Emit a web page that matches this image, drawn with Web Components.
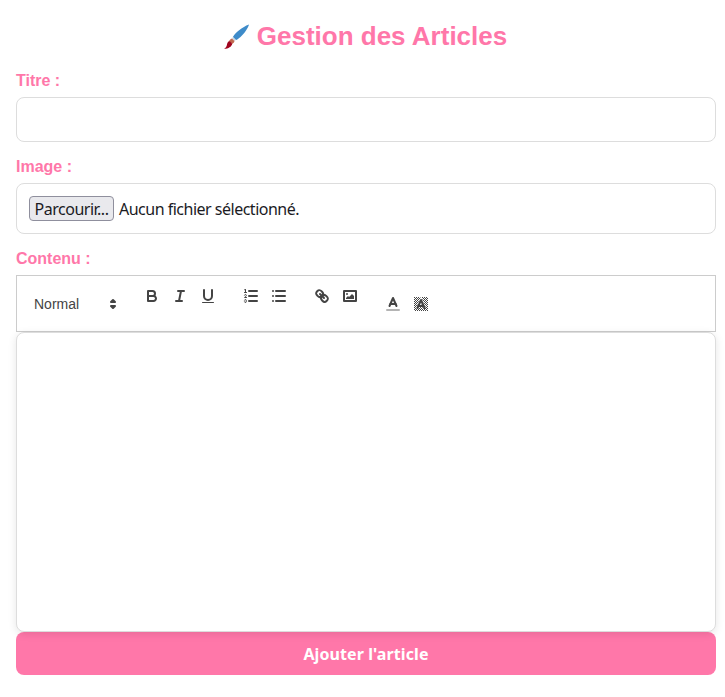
<!DOCTYPE html>
<html lang="fr">
<head>
<meta charset="utf-8">
<title>Gestion des Articles</title>
<style>
  html, body { margin: 0; background: #fff; }
  body { font-family: "Liberation Sans", Arial, sans-serif; }
</style>
</head>
<body>
<template id="tpl-form">
  <style>
    :host { display: block; padding: 0 9px 22px 16px; }
    h2 {
      margin: 0;
      height: 71px;
      box-sizing: border-box;
      padding: 2px 3px 0 0;
      display: flex;
      align-items: center;
      justify-content: center;
      gap: 7px;
      font: bold 26px "Liberation Sans", Arial, sans-serif;
      color: #ff77a9;
    }
    h2 svg { width: 28px; height: 28px; flex: none; }
    .stack { display: flex; flex-direction: column; }
  </style>
  <h2>
    <svg viewBox="0 0 28 28">
      <path d="M27 1.5c-1 3.5-4.5 9-8.5 12.5-1.8 1.6-3.4 2.6-4.6 3.1l-3-3c.7-1.5 2-3.2 3.8-4.9C18.500 5.800 24 2.400 27 1.500z" fill="#3e8bc9"/>
      <path d="M10.900 14.100l3 3-1.400.9-2.600-2.600z" fill="#ccd6dd"/>
      <path d="M9.900 15.400l2.600 2.600c-.3 1.300-1.100 2.300-2.300 2.900l-3.100-2.900c.6-1.300 1.500-2.200 2.800-2.600z" fill="#c1694f"/>
      <path d="M7.100 18c1.300.6 2.400 1.700 3.100 2.900-.7 2.600-3.500 4.700-8.200 4.900 2-1.100 2.700-2.500 3-4.300.2-1.400.9-2.700 2.100-3.500z" fill="#a0041e"/>
    </svg>
    <span>Gestion des Articles</span>
  </h2>
  <div class="stack"><slot></slot></div>
</template>

<template id="tpl-field">
  <style>
    :host { display: block; }
    label {
      display: block;
      box-sizing: border-box;
      height: 26px;
      padding-top: 1px;
      font: bold 16px/18px "Liberation Sans", Arial, sans-serif;
      color: #ff77a9;
    }
  </style>
  <label></label>
  <slot></slot>
</template>

<template id="tpl-text">
  <style>
    :host { display: block; margin-bottom: 15px; }
    input {
      display: block;
      box-sizing: border-box;
      width: 100%;
      height: 45px;
      padding: 10px;
      border: 1px solid #ddd;
      border-radius: 8px;
      outline: none;
      font: 16px "Liberation Sans", Arial, sans-serif;
    }
  </style>
  <input type="text" aria-label="Titre">
</template>

<template id="tpl-file">
  <style>
    :host {
      display: flex;
      align-items: center;
      gap: 5px;
      box-sizing: border-box;
      height: 51px;
      margin-bottom: 15px;
      padding: 0 12px;
      border: 1px solid #ddd;
      border-radius: 8px;
      font: 16px "Noto Sans", Tahoma, sans-serif;
      letter-spacing: -0.5px;
      color: #1b1b1f;
    }
    button {
      width: 85px;
      height: 25px;
      padding: 0;
      border: 1px solid #8f8f9d;
      border-radius: 4px;
      background: #e9e9ed;
      color: #1b1b1f;
      font: inherit;
      letter-spacing: inherit;
      line-height: 1;
    }
  </style>
  <button type="button">Parcourir...</button>
  <span>Aucun fichier sélectionné.</span>
</template>

<template id="tpl-toolbar">
  <style>
    :host {
      display: flex;
      align-items: flex-start;
      box-sizing: border-box;
      height: 57px;
      padding: 8px;
      border: 1px solid #ccc;
      font: 14px "Liberation Sans", Helvetica, Arial, sans-serif;
      color: #444;
    }
    .group { display: flex; align-items: flex-start; margin-right: 15px; }
    .shift { margin-top: 8px; }
    .picker {
      display: flex;
      align-items: center;
      justify-content: space-between;
      box-sizing: border-box;
      width: 98px;
      height: 24px;
      padding: 0 1px 0 9px;
    }
    button {
      width: 28px;
      height: 24px;
      padding: 3px 5px;
      border: 0;
      background: none;
    }
    svg { display: block; width: 18px; height: 18px; }
    .s { fill: none; stroke: #444; stroke-width: 2; stroke-linecap: round; stroke-linejoin: round; }
    .t { fill: none; stroke: #444; stroke-width: 1; stroke-linecap: round; stroke-linejoin: round; }
    .f { fill: #444; }
    .halo { fill: none; stroke: #fff; stroke-width: 3; }
    .picker svg .p { fill: none; stroke: #444; stroke-width: 2; stroke-linejoin: round; }
  </style>
  <div class="group shift">
    <div class="picker">
      <span>Normal</span>
      <svg viewBox="0 0 18 18">
        <polygon class="p" points="7 11 9 13 11 11 7 11"/>
        <polygon class="p" points="7 7 9 5 11 7 7 7"/>
      </svg>
    </div>
  </div>
  <div class="group">
    <button type="button" aria-label="Gras"><svg viewBox="0 0 18 18">
      <path class="s" d="M5,4H9.500A2.500,2.500,0,0,1,12,6.500v0A2.500,2.500,0,0,1,9.500,9H5A0,0,0,0,1,5,9V4A0,0,0,0,1,5,4Z"/>
      <path class="s" d="M5,9h5.500A2.500,2.500,0,0,1,13,11.500v0A2.500,2.500,0,0,1,10.500,14H5a0,0,0,0,1,0,0V9A0,0,0,0,1,5,9Z"/>
    </svg></button>
    <button type="button" aria-label="Italique"><svg viewBox="0 0 18 18">
      <line class="s" x1="7" x2="13" y1="4" y2="4"/>
      <line class="s" x1="5" x2="11" y1="14" y2="14"/>
      <line class="s" x1="8" x2="10" y1="14" y2="4"/>
    </svg></button>
    <button type="button" aria-label="Souligné"><svg viewBox="0 0 18 18">
      <path class="s" d="M5,3V9a4.012,4.012,0,0,0,4,4H9a4.012,4.012,0,0,0,4-4V3"/>
      <rect class="f" height="1" rx=".5" ry=".5" width="12" x="3" y="15"/>
    </svg></button>
  </div>
  <div class="group">
    <button type="button" aria-label="Liste numérotée"><svg viewBox="0 0 18 18">
      <line class="s" x1="7" x2="15" y1="4" y2="4"/>
      <line class="s" x1="7" x2="15" y1="9" y2="9"/>
      <line class="s" x1="7" x2="15" y1="14" y2="14"/>
      <line class="t" x1="2.500" x2="4.500" y1="5.500" y2="5.500"/>
      <path class="f" d="M3.500,6A0.500,0.500,0,0,1,3,5.500V3.085l-0.276.138A0.500,0.500,0,0,1,2.053,3c-0.124-.247-0.023-0.324.224-0.447l1-.5A0.500,0.500,0,0,1,4,2.500v3A0.500,0.500,0,0,1,3.500,6Z"/>
      <path class="t" d="M4.500,10.500h-2c0-.234,1.850-1.076,1.850-2.234A0.959,0.959,0,0,0,2.500,8.156"/>
      <path class="t" d="M2.500,14.846a0.959,0.959,0,0,0,1.850-.109A0.700,0.700,0,0,0,3.750,14a0.688,0.688,0,0,0,.6-0.736,0.959,0.959,0,0,0-1.850-.109"/>
    </svg></button>
    <button type="button" aria-label="Liste à puces"><svg viewBox="0 0 18 18">
      <line class="s" x1="6" x2="15" y1="4" y2="4"/>
      <line class="s" x1="6" x2="15" y1="9" y2="9"/>
      <line class="s" x1="6" x2="15" y1="14" y2="14"/>
      <line class="s" x1="3" x2="3" y1="4" y2="4"/>
      <line class="s" x1="3" x2="3" y1="9" y2="9"/>
      <line class="s" x1="3" x2="3" y1="14" y2="14"/>
    </svg></button>
  </div>
  <div class="group">
    <button type="button" aria-label="Lien"><svg viewBox="0 0 18 18">
      <line class="s" x1="7" x2="11" y1="7" y2="11"/>
      <path class="s" d="M8.900,4.577a3.476,3.476,0,0,1,.36,4.679A3.476,3.476,0,0,1,4.577,8.900C3.185,7.500,2.035,6.400,4.217,4.217S7.500,3.185,8.900,4.577Z"/>
      <path class="s" d="M13.423,9.100a3.476,3.476,0,0,0-4.679-.36,3.476,3.476,0,0,0,.36,4.679c1.392,1.392,2.500,2.542,4.679.36S14.815,10.500,13.423,9.100Z"/>
    </svg></button>
    <button type="button" aria-label="Image"><svg viewBox="0 0 18 18">
      <rect class="s" height="10" width="12" x="3" y="4"/>
      <circle class="f" cx="6" cy="7" r="1"/>
      <polyline class="f" points="5 12 5 11 7 9 8 10 11 7 13 9 13 12 5 12"/>
    </svg></button>
  </div>
  <div class="group shift">
    <button type="button" aria-label="Couleur"><svg viewBox="0 0 18 18">
      <line class="s" style="opacity:.4" x1="3" x2="15" y1="15" y2="15"/>
      <polyline class="s" points="5.500 11 9 3 12.500 11"/>
      <line class="s" x1="11.630" x2="6.380" y1="9" y2="9"/>
    </svg></button>
    <button type="button" aria-label="Fond"><svg viewBox="0 0 18 18">
      <defs>
        <pattern id="hatch" width="2" height="2" patternUnits="userSpaceOnUse">
          <rect width="1" height="1" fill="#444"/>
          <rect x="1" y="1" width="1" height="1" fill="#444"/>
        </pattern>
      </defs>
      <rect x="2" y="2" width="14" height="14" fill="url(#hatch)"/>
      <polyline class="halo" points="5.500 13 9 5 12.500 13"/>
      <polyline class="s" points="5.500 13 9 5 12.500 13"/>
      <line class="s" x1="11.630" x2="6.380" y1="11" y2="11"/>
    </svg></button>
  </div>
</template>

<template id="tpl-editor">
  <style>
    :host {
      display: block;
      position: relative;
      box-sizing: border-box;
      height: 300px;
      border: 1px solid #ddd;
      border-radius: 8px;
      background: #fff;
      box-shadow: 0 2px 8px rgba(0, 0, 0, 0.1);
    }
  </style>
</template>

<template id="tpl-submit">
  <style>
    :host { display: block; }
    button {
      display: block;
      width: 100%;
      height: 43px;
      border: 0;
      border-radius: 8px;
      background: #ff77a9;
      color: #fff;
      font: bold 16px "Noto Sans", Tahoma, sans-serif;
      letter-spacing: 0.1px;
    }
  </style>
  <button type="button"><slot></slot></button>
</template>

<article-form>
  <form-field label="Titre :"><text-box></text-box></form-field>
  <form-field label="Image :"><file-box></file-box></form-field>
  <form-field label="Contenu :">
    <editor-toolbar></editor-toolbar>
    <editor-area></editor-area>
  </form-field>
  <submit-button>Ajouter l'article</submit-button>
</article-form>

<script>
  // every element just clones its template into an open shadow root
  class TemplateElement extends HTMLElement {
    constructor() {
      super();
      this.attachShadow({ mode: 'open' });
      const tpl = document.getElementById(this.constructor.tpl);
      this.shadowRoot.appendChild(tpl.content.cloneNode(true));
    }
  }

  class ArticleForm extends TemplateElement { static tpl = 'tpl-form'; }
  class TextBox extends TemplateElement { static tpl = 'tpl-text'; }
  class FileBox extends TemplateElement { static tpl = 'tpl-file'; }
  class EditorToolbar extends TemplateElement { static tpl = 'tpl-toolbar'; }
  class EditorArea extends TemplateElement { static tpl = 'tpl-editor'; }
  class SubmitButton extends TemplateElement { static tpl = 'tpl-submit'; }

  class FormField extends TemplateElement {
    static tpl = 'tpl-field';
    connectedCallback() {
      this.shadowRoot.querySelector('label').textContent = this.getAttribute('label');
    }
  }

  customElements.define('article-form', ArticleForm);
  customElements.define('form-field', FormField);
  customElements.define('text-box', TextBox);
  customElements.define('file-box', FileBox);
  customElements.define('editor-toolbar', EditorToolbar);
  customElements.define('editor-area', EditorArea);
  customElements.define('submit-button', SubmitButton);
</script>
</body>
</html>
